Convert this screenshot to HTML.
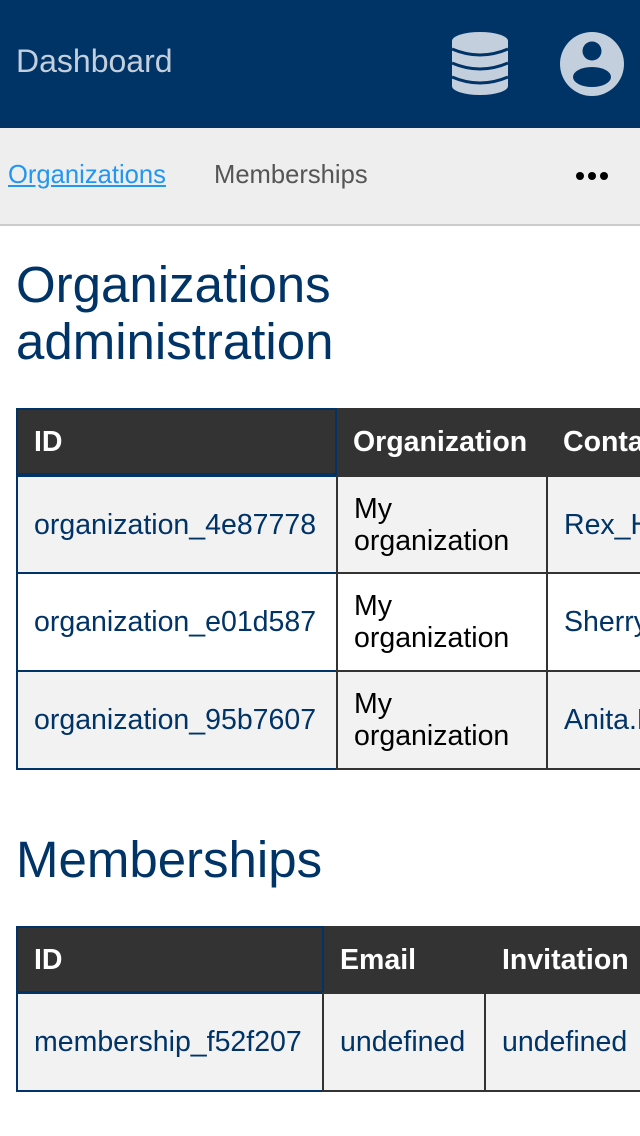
<!DOCTYPE html>
<html><head><meta charset="utf-8"><style>
*{box-sizing:border-box;margin:0;padding:0}
body{width:640px;height:1136px;overflow:hidden;background:#fff;font-family:"Liberation Sans",sans-serif;position:relative}
.a{position:absolute}
.hd{left:0;top:0;width:640px;height:128px;background:#003366}
.nav{left:0;top:128px;width:640px;height:98px;background:#eee;border-bottom:2px solid #ccc}
.c{position:absolute;font-size:28.5px;line-height:32px;padding-left:16px;display:flex;align-items:center;white-space:nowrap;overflow:hidden}
.th{background:#333;color:#fff;font-weight:bold}
.l{color:#003366}
</style></head><body>
<div class="a hd"></div>
<div class="a" style="left:16px;top:43px;font-size:32px;color:#c3cfdc">Dashboard</div>
<svg class="a" style="left:450px;top:31px" width="60" height="66" viewBox="0 0 60 66">
<g fill="#c3cfdc"><ellipse cx="30" cy="10" rx="28" ry="9"/><rect x="2" y="10" width="56" height="45"/><ellipse cx="30" cy="55" rx="28" ry="9"/></g>
<g fill="none" stroke="#003366" stroke-width="3"><path d="M2 18 Q30 30 58 18"/><path d="M2 32 Q30 44 58 32"/><path d="M2 46 Q30 58 58 46"/></g></svg>
<svg class="a" style="left:560px;top:32px" width="64" height="64" viewBox="0 0 64 64">
<circle cx="32" cy="32" r="32" fill="#c3cfdc"/><circle cx="32" cy="19" r="9.5" fill="#003366"/><ellipse cx="32" cy="45" rx="19" ry="10" fill="#003366"/></svg>
<div class="a nav"></div>
<div class="a" style="left:8px;top:161px;font-size:25.6px;color:#2196f3;text-decoration:underline">Organizations</div>
<div class="a" style="left:214px;top:161px;font-size:25.6px;color:#555">Memberships</div>
<div class="a" style="left:576px;top:172px;display:flex;gap:4px"><i style="width:8px;height:8px;border-radius:50%;background:#000"></i><i style="width:8px;height:8px;border-radius:50%;background:#000"></i><i style="width:8px;height:8px;border-radius:50%;background:#000"></i></div>
<div class="a" style="left:16px;top:256px;font-size:51px;line-height:57px;color:#003366">Organizations<br>administration</div>

<div class="c th" style="left:16px;top:408px;width:321px;height:67px;border:2px solid #003366">ID</div>
<div class="c th" style="left:337px;top:408px;width:210px;height:67px">Organization</div>
<div class="c th" style="left:547px;top:408px;width:120px;height:67px">Contact</div>

<div class="c l" style="left:16px;top:475px;width:322px;height:99px;background:#f2f2f2;border:2px solid #003366">organization_4e87778</div>
<div class="c" style="left:336px;top:475px;width:212px;height:99px;background:#f2f2f2;border:2px solid #333">My<br>organization</div>
<div class="c l" style="left:546px;top:475px;width:120px;height:99px;background:#f2f2f2;border:2px solid #333">Rex_Hal</div>

<div class="c l" style="left:16px;top:572px;width:322px;height:100px;background:#fff;border:2px solid #003366">organization_e01d587</div>
<div class="c" style="left:336px;top:572px;width:212px;height:100px;background:#fff;border:2px solid #333">My<br>organization</div>
<div class="c l" style="left:546px;top:572px;width:120px;height:100px;background:#fff;border:2px solid #333">Sherry</div>

<div class="c l" style="left:16px;top:670px;width:322px;height:100px;background:#f2f2f2;border:2px solid #003366">organization_95b7607</div>
<div class="c" style="left:336px;top:670px;width:212px;height:100px;background:#f2f2f2;border:2px solid #333">My<br>organization</div>
<div class="c l" style="left:546px;top:670px;width:120px;height:100px;background:#f2f2f2;border:2px solid #333">Anita.B</div>

<div class="a" style="left:16px;top:831px;font-size:51px;line-height:57px;color:#003366">Memberships</div>

<div class="c th" style="left:16px;top:926px;width:308px;height:67px;border:2px solid #003366">ID</div>
<div class="c th" style="left:324px;top:926px;width:162px;height:67px">Email</div>
<div class="c th" style="left:486px;top:926px;width:180px;height:67px">Invitation</div>

<div class="c l" style="left:16px;top:992px;width:308px;height:100px;background:#f2f2f2;border:2px solid #003366">membership_f52f207</div>
<div class="c l" style="left:322px;top:992px;width:164px;height:100px;background:#f2f2f2;border:2px solid #333">undefined</div>
<div class="c l" style="left:484px;top:992px;width:180px;height:100px;background:#f2f2f2;border:2px solid #333">undefined</div>
</body></html>
